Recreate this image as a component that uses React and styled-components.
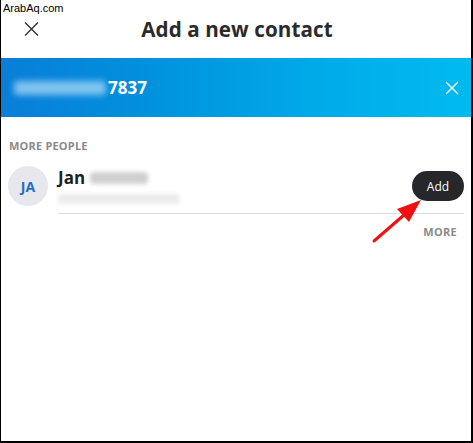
import React from 'react';
import styled, { createGlobalStyle } from 'styled-components';

const GlobalStyle = createGlobalStyle`
    html, body {
        margin: 0;
        padding: 0;
        background: #fff;
    }
    * { box-sizing: border-box; }
`;

const Frame = styled.div`
    position: relative;
    width: 473px;
    height: 443px;
    border-left: 1px solid #000;
    border-right: 2px solid #000;
    border-bottom: 2px solid #000;
    font-family: "Open Sans", "Noto Sans", sans-serif;
    overflow: hidden;
`;

const Watermark = styled.div`
    position: absolute;
    left: 2px;
    top: 2px;
    font-family: "Liberation Sans", Arial, sans-serif;
    font-size: 11px;
    color: #000;
`;

const Header = styled.div`
    height: 58px;
    display: flex;
    align-items: center;
    justify-content: center;
    position: relative;
`;

const IconButton = styled.div`
    position: absolute;
    left: ${p => p.left}px;
    right: ${p => p.right}px;
    top: 50%;
    transform: translateY(-50%);
    display: flex;
`;

const Title = styled.h1`
    margin: 0 0 0 2px;
    font-size: 20.6px;
    font-weight: 700;
    color: #2b2b2b;
    letter-spacing: 0.1px;
`;

const SearchBar = styled.div`
    height: 59px;
    display: flex;
    align-items: center;
    padding-left: 13px;
    position: relative;
    background: linear-gradient(90deg, #0a7ed8 0%, #0190dd 30%, #00acea 70%, #00bbef 100%);
`;

const Blur = styled.span`
    display: inline-block;
    width: ${p => p.w}px;
    height: ${p => p.h}px;
    background: ${p => p.color};
    border-radius: 4px;
    filter: blur(${p => p.blur || 3}px);
`;

const Number = styled.span`
    color: #fff;
    font-weight: 700;
    font-size: 17px;
    margin-left: 2px;
`;

const SectionLabel = styled.div`
    padding: 22px 0 0 8px;
    font-size: 11px;
    line-height: 14px;
    font-weight: 700;
    color: #8a8a8a;
    letter-spacing: 0.2px;
`;

const Row = styled.div`
    display: flex;
    align-items: flex-start;
    margin-top: 13px;
    padding: 0 7px;
`;

const Avatar = styled.div`
    width: 40px;
    height: 40px;
    border-radius: 50%;
    background: #e7e8ed;
    color: #1f6fc4;
    font-weight: 700;
    font-size: 14px;
    display: flex;
    align-items: center;
    justify-content: center;
    flex-shrink: 0;
`;

const Body = styled.div`
    flex: 1;
    margin-left: 10px;
    display: flex;
    align-items: flex-start;
    border-bottom: 1px solid #dcdcdc;
    height: 48px;
`;

const Info = styled.div`
    flex: 1;
    display: flex;
    flex-direction: column;
    gap: 7px;
    padding-top: 2px;
`;

const NameLine = styled.div`
    display: flex;
    align-items: center;
    gap: 5px;
`;

const Name = styled.span`
    font-size: 17px;
    font-weight: 700;
    color: #1f1f1f;
    line-height: 19px;
`;

const AddButton = styled.button`
    width: 52px;
    height: 30px;
    margin-top: 5px;
    border: none;
    border-radius: 15px;
    background: #25272b;
    color: #fff;
    font-family: "Open Sans", "Noto Sans", sans-serif;
    font-size: 12px;
    padding: 0;
`;

const MoreLink = styled.div`
    text-align: right;
    padding: 11px 14px 0 0;
    font-size: 11px;
    line-height: 14px;
    font-weight: 700;
    color: #8a8a8a;
    letter-spacing: 0.3px;
`;

const Arrow = styled.svg`
    position: absolute;
    left: 365px;
    top: 193px;
`;

const Cross = ({ size, color, width }) => (
    <svg width={size} height={size} viewBox="0 0 14 14">
        <path d="M1 1 L13 13 M13 1 L1 13" stroke={color} strokeWidth={width} />
    </svg>
);

export default function App() {
    return (
        <Frame>
            <GlobalStyle />
            <Watermark>ArabAq.com</Watermark>
            <Header>
                <IconButton left={23}>
                    <Cross size={15} color="#333" width={1.3} />
                </IconButton>
                <Title>Add a new contact</Title>
            </Header>
            <SearchBar>
                <Blur w={92} h={14} color="rgba(170,215,250,0.75)" blur={3} />
                <Number>7837</Number>
                <IconButton right={12}>
                    <Cross size={14} color="#fff" width={1.4} />
                </IconButton>
            </SearchBar>
            <SectionLabel>MORE PEOPLE</SectionLabel>
            <Row>
                <Avatar>JA</Avatar>
                <Body>
                    <Info>
                        <NameLine>
                            <Name>Jan</Name>
                            <Blur w={58} h={12} color="#cfcfcf" blur={2} />
                        </NameLine>
                        <Blur w={122} h={10} color="#ececec" blur={2} />
                    </Info>
                    <AddButton>Add</AddButton>
                </Body>
            </Row>
            <MoreLink>MORE</MoreLink>
            <Arrow width="60" height="52" viewBox="0 0 60 52">
                <path d="M8 48 L38 22" stroke="#f01010" strokeWidth="3" strokeLinecap="round" />
                <path d="M55 7 L31 16 L43 29 Z" fill="#f01010" />
            </Arrow>
        </Frame>
    );
}
